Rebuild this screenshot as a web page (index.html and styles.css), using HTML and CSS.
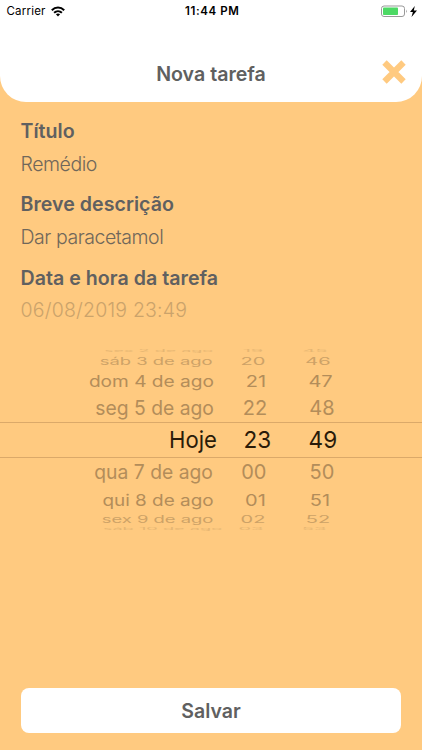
FILE: index.html
```html
<!DOCTYPE html>
<html lang="pt-BR">
<head>
<meta charset="utf-8">
<title>Nova tarefa</title>
<link rel="stylesheet" href="styles.css">
</head>
<body>
<header class="header">
  <div class="status">
    <div class="carrier"><span>Carrier</span>
      <svg width="14" height="11" viewBox="0 0 14 11"><g fill="none" stroke="#000" stroke-width="2"><path d="M.8 4.2C4.4.6 9.6.6 13.2 4.2"/><path d="M3.1 6.700c2.200-2.100 5.600-2.100 7.800 0"/></g><path d="M4.900 8.300c1.200-1.100 3-1.100 4.200 0L7 10.500z"/></svg>
    </div>
    <span class="clock">11:44 PM</span>
    <svg class="battery" width="37" height="13" viewBox="0 0 37 13"><rect x=".5" y="1" width="23" height="10.500" rx="2.500" fill="none" stroke="#999"/><rect x="2" y="2.500" width="15" height="7.500" rx=".8" fill="#4cd964"/><path d="M25 4.500q1.500 1.700 0 3.500z" fill="#888"/><path d="M33.800 1L29 7h2.900l-1.400 5L36 5.400h-3.200z"/></svg>
  </div>
  <div class="titlebar">
    <h1>Nova tarefa</h1>
    <svg class="close" width="24" height="24" viewBox="0 0 24 24"><path d="M2.500 2.500l19 19M21.500 2.500l-19 19" stroke="#ffca80" stroke-width="6.200"/></svg>
  </div>
</header>
<main class="form">
  <h2>Título</h2><p>Remédio</p>
  <h2>Breve descrição</h2><p>Dar paracetamol</p>
  <h2>Data e hora da tarefa</h2><p class="muted">06/08/2019 23:49</p>
</main>
<section class="picker">
  <div class="row r1"><span>sex 2 de ago</span><span>19</span><span>45</span></div>
  <div class="row r2"><span>sáb 3 de ago</span><span>20</span><span>46</span></div>
  <div class="row r3"><span>dom 4 de ago</span><span>21</span><span>47</span></div>
  <div class="row r4"><span>seg 5 de ago</span><span>22</span><span>48</span></div>
  <div class="row r5"><span>Hoje</span><span>23</span><span>49</span></div>
  <div class="row r6"><span>qua 7 de ago</span><span>00</span><span>50</span></div>
  <div class="row r7"><span>qui 8 de ago</span><span>01</span><span>51</span></div>
  <div class="row r8"><span>sex 9 de ago</span><span>02</span><span>52</span></div>
  <div class="row r9"><span>sáb 10 de ago</span><span>03</span><span>53</span></div>
</section>
<button class="save">Salvar</button>
</body>
</html>
```
FILE: styles.css
```css
* { box-sizing: border-box; }
body {
  margin: 0;
  width: 422px;
  height: 750px;
  overflow: hidden;
  display: flex;
  flex-direction: column;
  background: #ffca80;
  color: #606060;
  font-family: Inter, "Liberation Sans", sans-serif;
}
h1, h2, p { margin: 0; }
.header { height: 102px; background: #fff; border-radius: 0 0 26px 26px; }
.status {
  display: grid;
  grid-template-columns: 1fr auto 1fr;
  align-items: center;
  height: 22px;
  padding: 0 4px 0 6.5px;
  color: #000;
  font-size: 11.5px;
}
.carrier { display: flex; align-items: center; gap: 5.5px; letter-spacing: .2px; }
.clock { font-weight: 600; letter-spacing: .6px; }
.battery { justify-self: end; }
.titlebar {
  display: grid;
  grid-template-columns: 1fr auto 1fr;
  align-items: center;
  height: 46px;
  margin-top: 28px;
  padding: 0 16px;
}
.titlebar h1 { grid-column: 2; font-size: 19.6px; line-height: 46px; padding-top: 1px; font-weight: 600; }
.close { justify-self: end; margin-top: -3px; }
.form { height: 245px; padding: 13px 20.5px 0; }
.form h2 { height: 32px; font-size: 19.6px; line-height: 32px; font-weight: 600; letter-spacing: .03px; }
.form p { height: 41.3px; font-size: 19.5px; line-height: 34px; font-weight: 300; letter-spacing: -.45px; color: #70675a; }
.form .muted { color: #cba36b; letter-spacing: .2px; line-height: 33px; }
.picker { height: 186px; font-size: 20px; color: #b38d5a; }
.row {
  --x: .965;
  --y: 1;
  display: grid;
  align-items: center;
  white-space: nowrap;
}
.row span { justify-self: center; transform: scaleY(var(--y)); }
.row span:first-child {
  justify-self: end;
  transform: scale(var(--x), var(--y));
  transform-origin: right center;
}
.r1 { --x: .9; --y: .18; height: 8px; line-height: 8px; grid-template-columns: 213px 80px 44px; color: #e6b673; }
.r2 { --x: .92; --y: .52; height: 12px; line-height: 12px; grid-template-columns: 213px 80px 50px; color: #cda267; }
.r3 { --x: .955; --y: .8; height: 27px; line-height: 28px; grid-template-columns: 214px 84px 45px; }
.r4 { height: 28px; line-height: 28px; grid-template-columns: 214px 82px 52px; }
.r5 {
  --x: .94;
  height: 36px;
  line-height: 34px;
  border: solid #dba969;
  border-width: 1px 0;
  grid-template-columns: 217px 80px 52px;
  color: #2a1b09;
  font-size: 23.5px;
}
.r5 span:not(:first-child) { transform: scaleX(.96); }
.r6 { height: 28px; line-height: 28px; grid-template-columns: 212.5px 82.5px 54px; }
.r7 { --x: .945; --y: .8; height: 27px; line-height: 28px; grid-template-columns: 214px 83px 46px; }
.r8 { --x: .92; --y: .52; height: 12px; line-height: 12px; grid-template-columns: 213px 80px 50px; color: #cda267; }
.r9 { --x: .91; --y: .18; height: 8px; line-height: 8px; grid-template-columns: 222px 58px 68px; color: #e6b673; }
.save {
  height: 45px;
  margin: 155px 21px 0;
  padding: 1px 0 0;
  border: 0;
  border-radius: 8px;
  background: #fff;
  color: #606060;
  font: 600 19.5px/44px Inter, "Liberation Sans", sans-serif;
}
```
